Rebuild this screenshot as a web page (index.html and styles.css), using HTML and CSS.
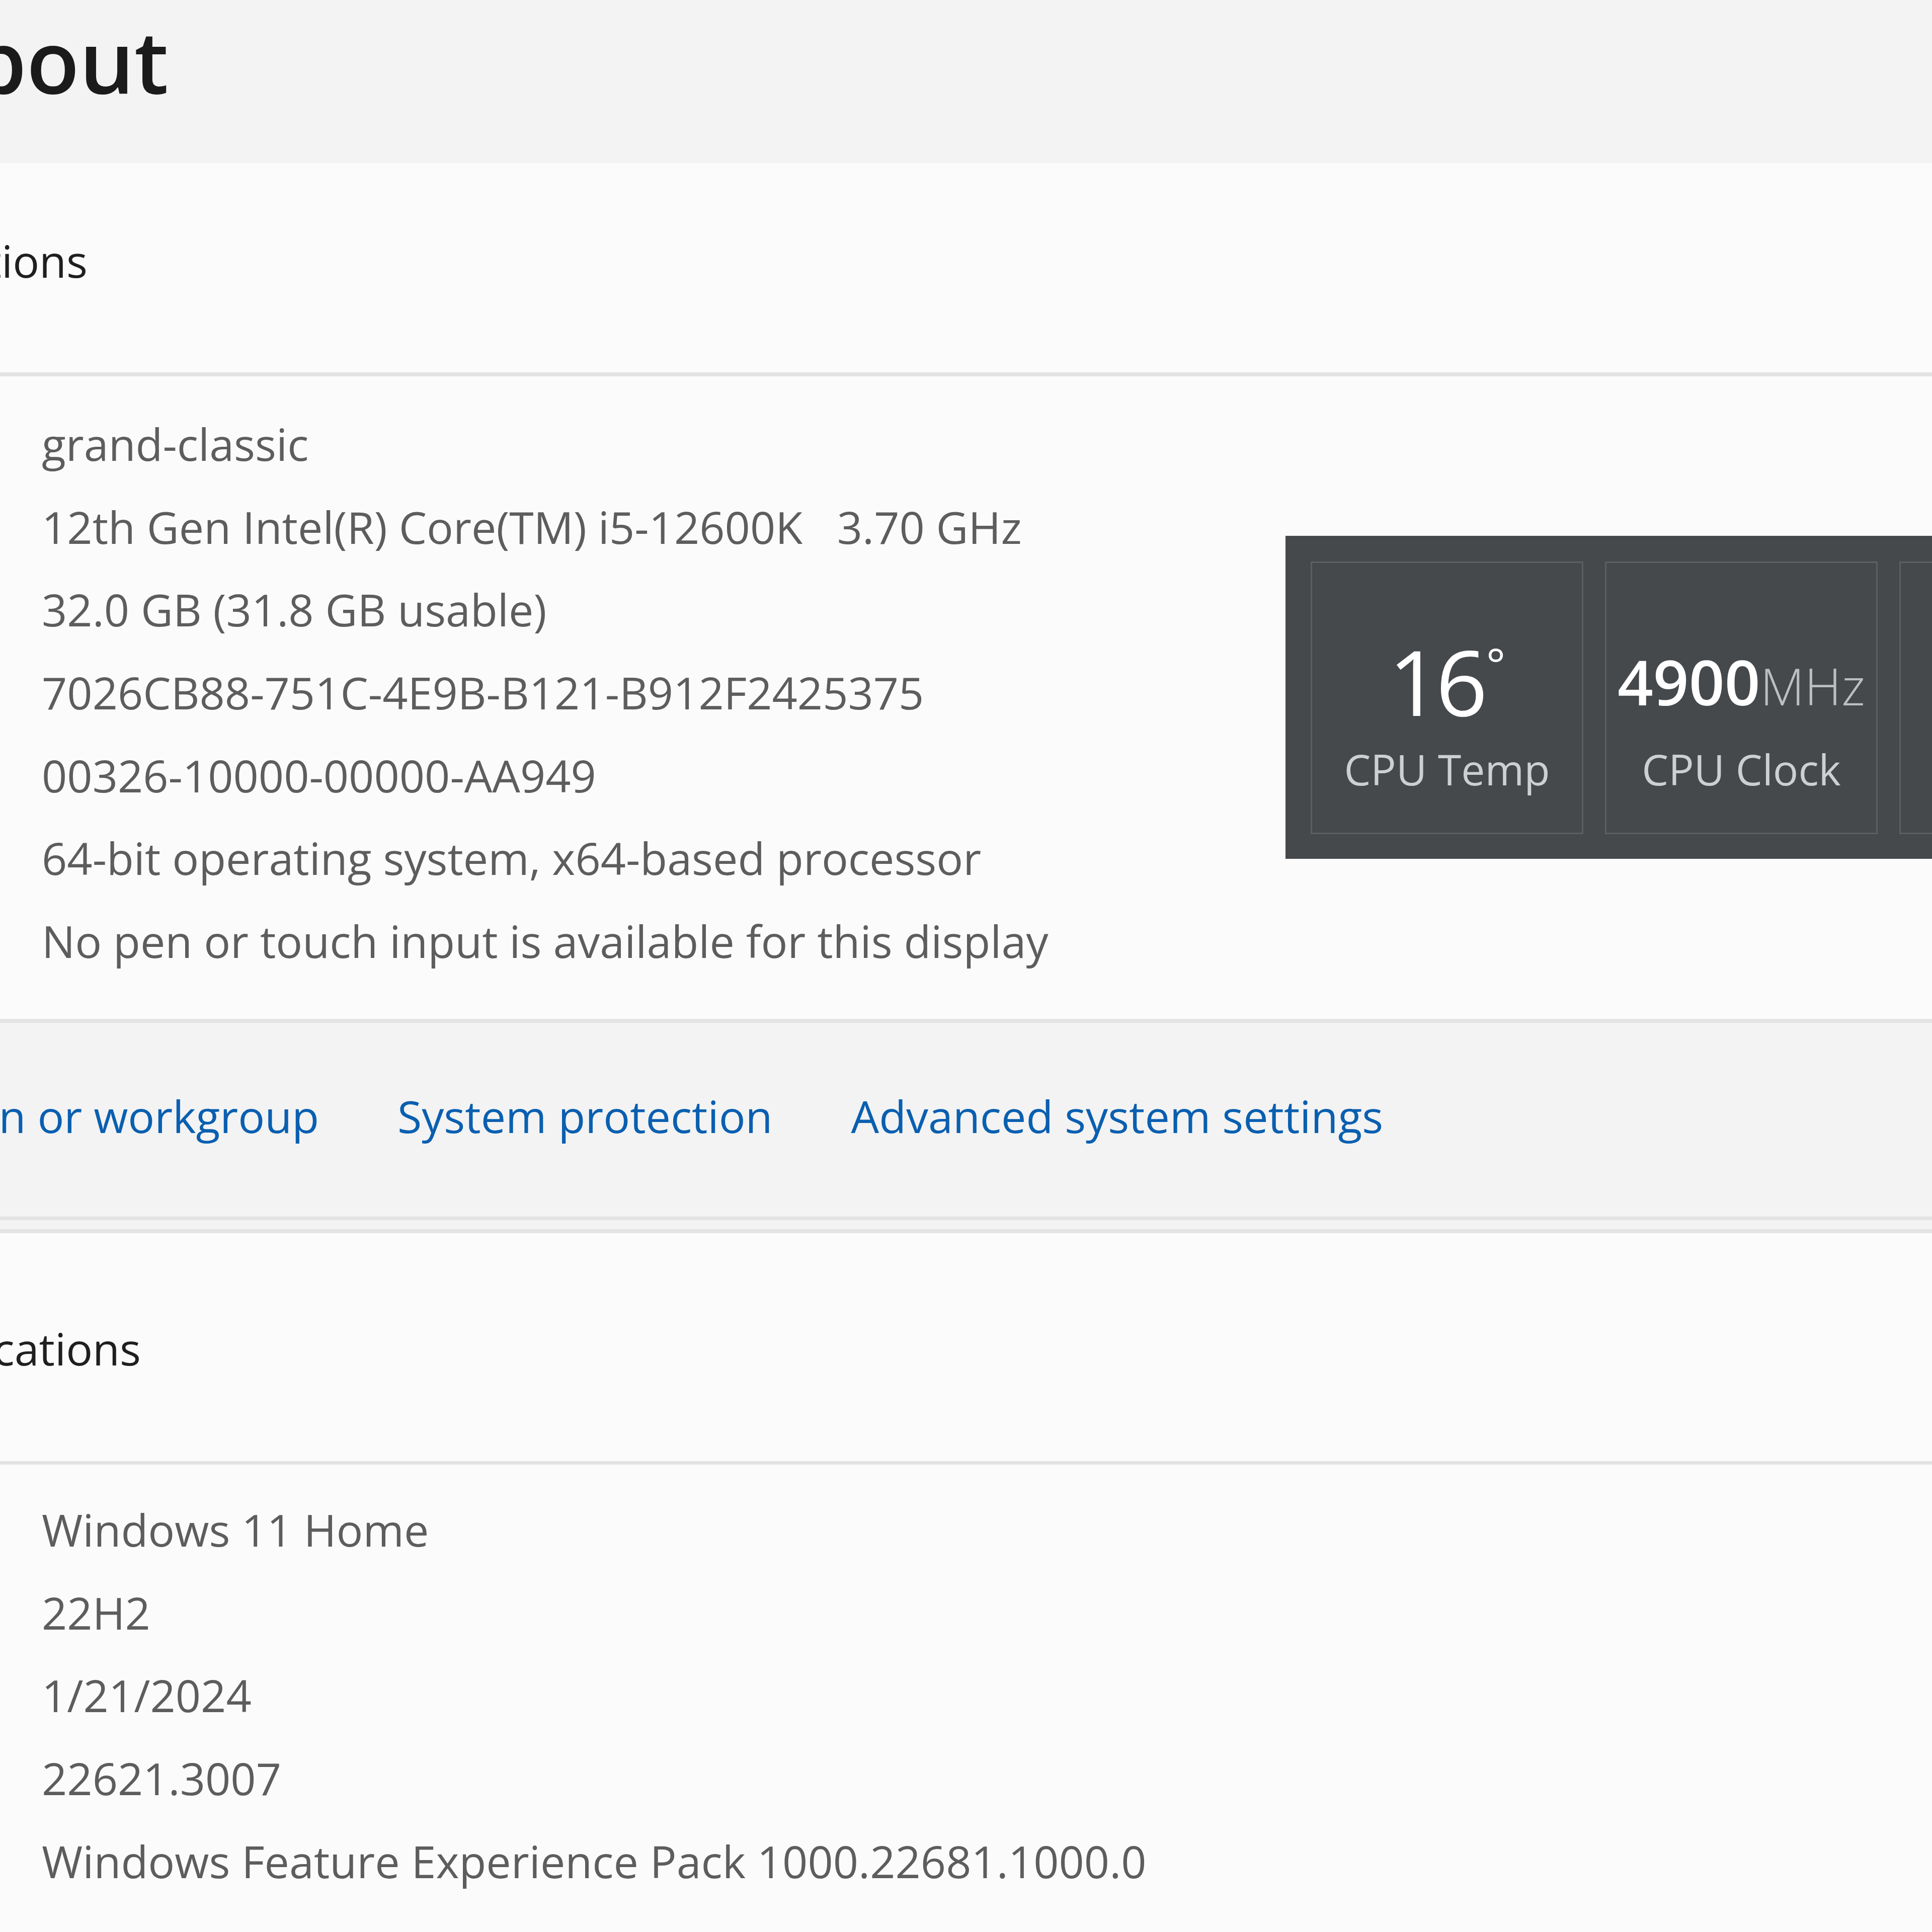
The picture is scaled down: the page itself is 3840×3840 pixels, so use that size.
FILE: index.html
```html
<!DOCTYPE html>
<html lang="en">
<head>
<meta charset="utf-8">
<title>About</title>
<link rel="stylesheet" href="styles.css">
</head>
<body>
<div class="page">
  <header class="title-bar">
    <div class="title-clip"><h1 class="title">About</h1></div>
  </header>

  <section class="card">
    <div class="card-head first">
      <div class="head-clip dev"><h2 class="head-text">Device specifications</h2></div>
    </div>
    <div class="specs first">
      <div class="row">grand-classic</div>
      <div class="row">12th Gen Intel(R) Core(TM) i5-12600K   3.70 GHz</div>
      <div class="row">32.0 GB (31.8 GB usable)</div>
      <div class="row">7026CB88-751C-4E9B-B121-B912F2425375</div>
      <div class="row">00326-10000-00000-AA949</div>
      <div class="row">64-bit operating system, x64-based processor</div>
      <div class="row">No pen or touch input is available for this display</div>
    </div>
    <nav class="related">
      <div class="rel-lead"><a class="link" href="#">Domain or workgroup</a></div>
      <a class="link" href="#">System protection</a>
      <a class="link" href="#">Advanced system settings</a>
    </nav>
  </section>

  <section class="card second">
    <div class="card-head">
      <div class="head-clip win"><h2 class="head-text">Windows specifications</h2></div>
    </div>
    <div class="specs">
      <div class="row">Windows 11 Home</div>
      <div class="row">22H2</div>
      <div class="row">1/21/2024</div>
      <div class="row">22621.3007</div>
      <div class="row">Windows Feature Experience Pack 1000.22681.1000.0</div>
    </div>
  </section>

  <aside class="sensor">
    <div class="tile">
      <div class="tile-val">
        <div class="grp">
          <span class="big">16</span><span class="deg">°</span>
        </div>
      </div>
      <div class="tile-lbl">CPU Temp</div>
    </div>
    <div class="tile">
      <div class="tile-val">
        <div class="grp">
          <span class="mid">4900</span><span class="unit">MHz</span>
        </div>
      </div>
      <div class="tile-lbl">CPU Clock</div>
    </div>
    <div class="tile"></div>
  </aside>
</div>
</body>
</html>
```
FILE: styles.css
```css
* { box-sizing: border-box; }

html, body {
  margin: 0;
  padding: 0;
  overflow: hidden;
}

body {
  background: #fbfbfb;
  font-family: "Open Sans", "Noto Sans", sans-serif;
  font-size: 88px;
  color: #5d5d5d;
}

.page {
  position: relative;
  width: 3840px;
  height: 3840px;
  overflow: hidden;
  display: flex;
  flex-direction: column;
  background: #f3f3f3;
}

/* ---------- title ---------- */
.title-bar {
  height: 324px;
  flex-shrink: 0;
  padding-top: 33px;
  background: #f3f3f3;
}

.title-clip {
  width: 335px;
  display: flex;
  justify-content: flex-end;
}

.title {
  margin: 0;
  flex-shrink: 0;
  font-size: 172px;
  line-height: 1;
  font-weight: 600;
  color: #1b1b1b;
  white-space: nowrap;
}

/* ---------- cards ---------- */
.card {
  flex-shrink: 0;
  background: #fbfbfb;
}

.card.second {
  flex: 1 0 auto;
  margin-top: 18px;
  border-top: 8px solid #e3e3e3;
}

.card-head {
  height: 460px;
  padding-top: 185px;
  border-bottom: 7px solid #e3e3e3;
}

.card-head.first {
  height: 424px;
  padding-top: 150px;
  border-bottom-width: 8px;
}

.head-clip {
  display: flex;
  justify-content: flex-end;
}

.head-clip.dev { width: 174px; }
.head-clip.win { width: 280px; }

.head-text {
  margin: 0;
  flex-shrink: 0;
  font-size: 88px;
  line-height: 1;
  font-weight: 400;
  color: #1f1f1f;
  white-space: nowrap;
}

.specs {
  padding: 47px 0 0 83px;
}

.specs.first {
  padding-top: 52px;
  padding-bottom: 72px;
}

.row {
  height: 164.7px;
  line-height: 164.7px;
  white-space: pre;
}

/* ---------- related links ---------- */
.related {
  display: flex;
  height: 400px;
  padding-top: 141px;
  background: #f3f3f3;
  border-top: 8px solid #e3e3e3;
  border-bottom: 7px solid #e3e3e3;
}

.rel-lead {
  width: 634px;
  flex-shrink: 0;
  display: flex;
  justify-content: flex-end;
}

.link {
  flex-shrink: 0;
  line-height: 1;
  height: 88px;
  color: #0a5fb0;
  text-decoration: none;
  white-space: nowrap;
}

.related > .link {
  margin-left: 156px;
}

/* ---------- sensor gadget (floating overlay) ---------- */
.sensor {
  position: absolute;
  left: 2555px;
  top: 1065px;
  width: 1500px;
  display: flex;
  gap: 43px;
  padding: 51px 0 49px 50px;
  background: #46494c;
}

.tile {
  width: 542px;
  height: 542px;
  flex-shrink: 0;
  border: 3px solid #5c5f62;
  padding-top: 135px;
  display: flex;
  flex-direction: column;
  align-items: center;
}

.tile-val {
  height: 200px;
  display: flex;
  align-items: center;
  justify-content: center;
}

.grp {
  display: flex;
  align-items: baseline;
}

.big {
  font-size: 180px;
  line-height: 1;
  font-weight: 400;
  letter-spacing: -9px;
  color: #ffffff;
}

.deg {
  align-self: flex-start;
  margin-top: 10px;
  margin-left: 6px;
  font-size: 90px;
  line-height: 1;
  color: #ffffff;
}

.mid {
  font-size: 124px;
  line-height: 1;
  font-weight: 600;
  color: #ffffff;
}

.unit {
  font-size: 102px;
  line-height: 1;
  font-weight: 300;
  color: #bcbec0;
}

.tile-lbl {
  margin-top: 33px;
  font-size: 84px;
  line-height: 1;
  font-weight: 400;
  color: #cdcfd0;
  white-space: nowrap;
}
```
